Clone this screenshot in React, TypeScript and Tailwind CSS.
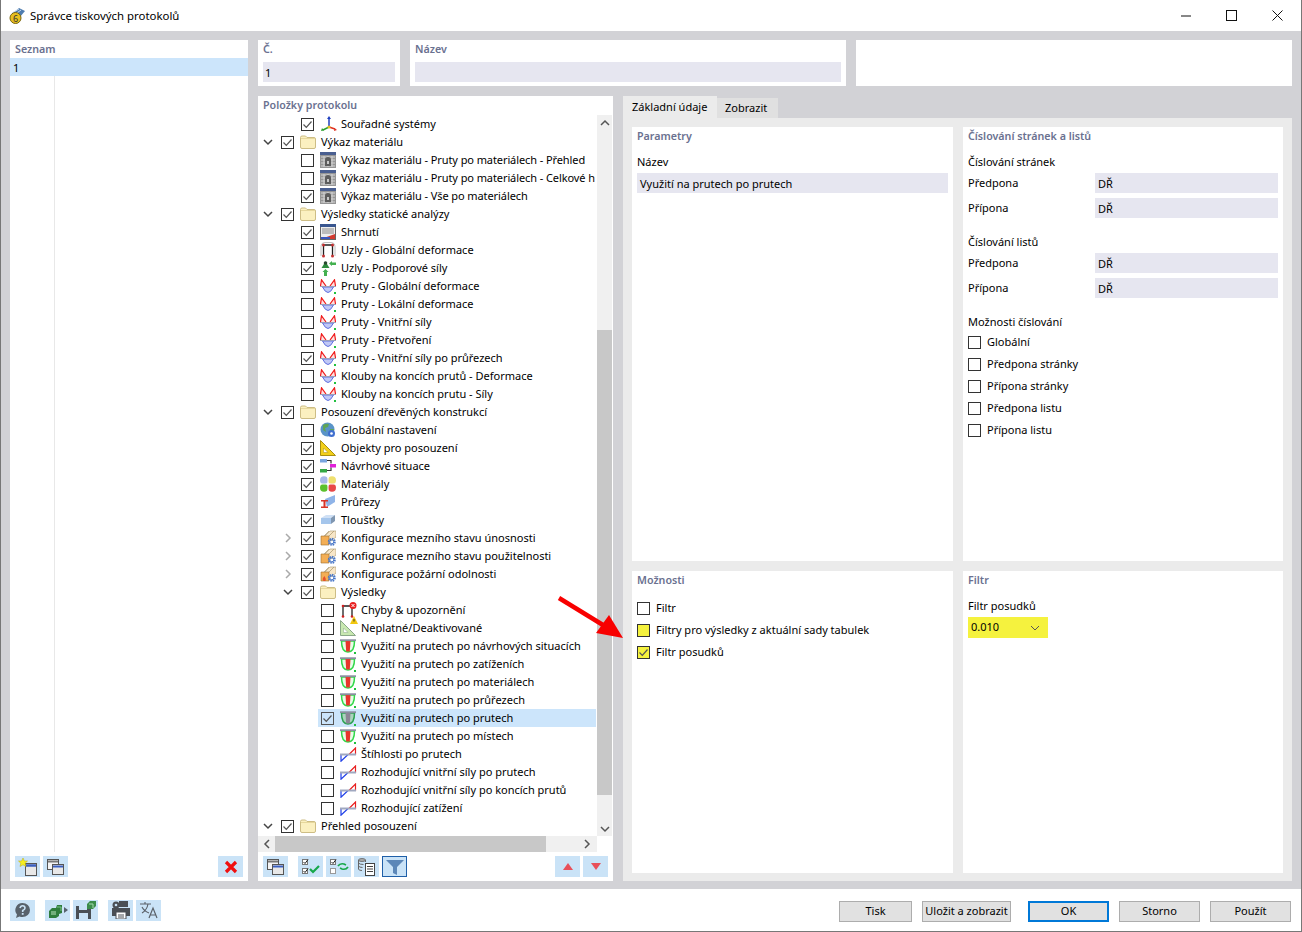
import React from 'react'

const font = 'font-["Noto_Sans",sans-serif]'

// --- icons ---------------------------------------------------------------

const Axes = () => (
  <svg width="18" height="16" viewBox="0 0 18 16">
    <path d="M9 2v9" stroke="#1f3fbf" strokeWidth="1.500" />
    <path d="M9 0l2 3H7z" fill="#1f3fbf" />
    <path d="M9 11l6 2" stroke="#e03020" strokeWidth="1.500" />
    <path d="M17 14l-3 1 .5-3z" fill="#e03020" />
    <path d="M9 11l-6 3" stroke="#2ca02c" strokeWidth="1.500" />
    <path d="M1 15l1-3 2 2.500z" fill="#2ca02c" />
    <circle cx="9" cy="11" r="1.500" fill="#e8c020" />
  </svg>
)

const Folder = () => (
  <svg width="16" height="14" viewBox="0 0 16 14">
    <path d="M.5 2.500Q.5 1 2 1h3.500l1.500 1.500h7q1.500 0 1.500 1.500v8q0 1.500-1.500 1.500H2Q.5 13.500.5 12z" fill="#fbf0c0" stroke="#cdbd85" />
    <path d="M1 3.500h14" stroke="#e6d79c" />
  </svg>
)

const TableGray = () => (
  <svg width="16" height="16" viewBox="0 0 16 16">
    <rect width="16" height="16" fill="#969696" />
    <rect width="16" height="3" fill="#4a5f90" />
    <path d="M1 5h14M1 8h14M1 11h14M1 14h14M4 4v11M8 4v11M12 4v11" stroke="#d4d4d4" />
    <path d="M8 5a3 3 0 0 1 3 3v6H5V8a3 3 0 0 1 3-3z" fill="#5c5c5c" />
    <rect x="7" y="9" width="2" height="3" fill="#c8c8c8" />
  </svg>
)

const Summary = () => (
  <svg width="16" height="16" viewBox="0 0 16 16">
    <rect x=".5" y=".5" width="15" height="15" fill="#eeeeee" stroke="#666" />
    <rect width="16" height="3" fill="#39568f" />
    <path d="M2 5h12M2 7h12M2 9h12" stroke="#8a8a8a" />
    <path d="M1 15l14-5v5z" fill="#d23a30" />
    <path d="M1 15h9v-2H1z" fill="#3a56c0" />
  </svg>
)

const NodeFrame = () => (
  <svg width="16" height="16" viewBox="0 0 16 16">
    <path d="M1 14V5Q1 .5 5 .5h6q4 0 4 4.500v9" fill="none" stroke="#c0c0c0" />
    <path d="M3.500 13V3h9v10" fill="none" stroke="#222" strokeWidth="1.300" />
    <circle cx="3.500" cy="3" r="1.500" fill="#c23030" />
    <circle cx="12.500" cy="3" r="1.500" fill="#c23030" />
    <circle cx="3.500" cy="14" r="1.500" fill="#c23030" />
    <circle cx="12.500" cy="14" r="1.500" fill="#c23030" />
  </svg>
)

const Supports = () => (
  <svg width="16" height="16" viewBox="0 0 16 16">
    <path d="M5.500 1.500l4 6.500h-8z" fill="#2e8b3d" />
    <circle cx="5.500" cy="3" r="1.800" fill="#2a4a30" />
    <path d="M5.500 9l3 3H7v4H4v-4H2.500z" fill="#43b04f" />
    <path d="M9 3.500L12 1v1.500h4v2.500h-4v1z" fill="#43b04f" />
  </svg>
)

const MemberDiagram = () => (
  <svg width="16" height="15" viewBox="0 0 16 15">
    <path d="M2.500 8q5.500 11 11 0z" fill="#c0c8f5" stroke="#6070e0" />
    <path d="M.5 7L1.500.8 6 7" fill="#fde0e0" stroke="#f01818" strokeWidth="1.200" />
    <path d="M15.500 7L14.500.8 10 7" fill="#fde0e0" stroke="#f01818" strokeWidth="1.200" />
    <path d="M0 7.500h16" stroke="#9a9fb8" />
    <rect x="14" y="13" width="2" height="2" fill="#22c040" />
  </svg>
)

const Globe = () => (
  <svg width="16" height="16" viewBox="0 0 16 16">
    <circle cx="7.500" cy="7.500" r="7" fill="#5a94c8" />
    <path d="M3 3q3-2 6-1l-1 3-3 1 1 4-3-2zM10 7l4 0-1 4-3 2z" fill="#5fa557" />
    <circle cx="11.500" cy="11.500" r="3.500" fill="#3f6fd0" />
    <circle cx="11.500" cy="11.500" r="1.300" fill="#fff" />
  </svg>
)

const Ruler = ({ fill = '#f2cf1a', stroke = '#a88f10' }: { fill?: string; stroke?: string }) => (
  <svg width="16" height="16" viewBox="0 0 16 16">
    <path d="M.5.5l15 15H.5z" fill={fill} stroke={stroke} />
    <path d="M3.500 8l4.500 4.500H3.500z" fill="#fff" stroke={stroke} strokeWidth=".5" />
  </svg>
)

const Situations = () => (
  <svg width="16" height="16" viewBox="0 0 16 16">
    <rect x="0" y="1" width="7" height="3.500" fill="#7aa6e0" />
    <rect x="0" y="11" width="7" height="3.500" fill="#35a845" />
    <rect x="10" y="6" width="6" height="3.500" fill="#e020d8" />
    <path d="M7 2.500h4v3M7 12.500h4v-3" fill="none" stroke="#333" strokeWidth="1.200" />
  </svg>
)

const Materials = () => (
  <svg width="16" height="16" viewBox="0 0 16 16">
    <circle cx="4" cy="4.200" r="4" fill="#a9b8e8" />
    <circle cx="12" cy="4.200" r="4" fill="#efe070" />
    <circle cx="4" cy="11.800" r="4" fill="#5cc02c" />
    <circle cx="12" cy="11.800" r="4" fill="#e84848" />
    <path d="M8 0v16M0 8h16" stroke="#fff" />
  </svg>
)

const Sections = () => (
  <svg width="16" height="16" viewBox="0 0 16 16">
    <path d="M5 5l10-4v7L7 13z" fill="#8fb4e8" />
    <path d="M1 6h7v1.500H5.500v5H8V14H1v-1.500h2.500v-5H1z" fill="#d8352a" />
  </svg>
)

const Thickness = () => (
  <svg width="16" height="16" viewBox="0 0 16 16">
    <path d="M1 6l5-3h9l-4 3z" fill="#cfe0f5" />
    <path d="M1 6h10v6H1z" fill="#a5c6ec" />
    <path d="M11 6l4-3v6l-4 3z" fill="#7f96b0" />
  </svg>
)

const Config = ({ fire = false }: { fire?: boolean }) => (
  <svg width="16" height="16" viewBox="0 0 16 16">
    <path d="M5 6l5-5h6v6l-5 4z" fill="#f7e6c8" stroke="#a89468" strokeWidth=".6" />
    <path d="M1 6h8v9H1z" fill="#f3ae55" stroke="#a07030" strokeWidth=".6" />
    <path d="M4 6l5-5M9 6l5-5" stroke="#a89468" strokeWidth=".7" />
    <circle cx="11.800" cy="11.800" r="3" fill="none" stroke="#4a78c8" strokeWidth="2" strokeDasharray="1.500 .8" />
    <circle cx="11.800" cy="11.800" r="2" fill="none" stroke="#4a78c8" />
    {fire && <path d="M3.500 15q-2-2 1-5 2 3 1 5z" fill="#e8502a" />}
  </svg>
)

const Errors = () => (
  <svg width="18" height="16" viewBox="0 0 18 16">
    <path d="M3 15V4h9v11" fill="none" stroke="#222" strokeWidth="1.300" />
    <circle cx="3" cy="4" r="1.300" fill="#d02020" />
    <circle cx="3" cy="14.500" r="1.300" fill="#d02020" />
    <circle cx="12" cy="14.500" r="1.300" fill="#d02020" />
    <circle cx="13" cy="3.500" r="3.500" fill="#e82020" />
    <path d="M11.500 2l3 3m0-3l-3 3" stroke="#fff" />
  </svg>
)

const Invalid = () => (
  <div className="relative w-[18px] h-4">
    <Ruler fill="#c8e8b0" stroke="#8aa888" />
    <svg className="absolute right-0 -top-1" width="8" height="8" viewBox="0 0 8 8">
      <path d="M4 0l4 8H0z" fill="#f2c810" />
      <path d="M4 3v2.500" stroke="#333" />
    </svg>
  </div>
)

const Utilization = ({ selected = false }: { selected?: boolean }) => (
  <svg width="16" height="15" viewBox="0 0 16 15">
    <path d="M1.500 2q0 11 6.500 11t6.500-11z" fill={selected ? '#a9d4bd' : '#e9fbe9'} stroke={selected ? '#2aa050' : '#30d848'} strokeWidth="1.500" />
    <path d="M5.500 2h5l-.7 10.500H6.200z" fill={selected ? '#8c8496' : '#e8352c'} />
    <path d="M0 1.200h16" stroke="#8a8fa0" strokeWidth="1.800" />
    <rect x="14" y="13" width="2" height="2" fill="#22c040" />
  </svg>
)

const Slender = () => (
  <svg width="17" height="15" viewBox="0 0 17 15">
    <path d="M9 7.500l6.500-6.500v6.500z" fill="#fff" stroke="#e82020" strokeWidth="1.200" />
    <path d="M1 7.500h7L1 14.200z" fill="#fff" stroke="#2040e8" strokeWidth="1.200" />
    <path d="M0 7.500h16" stroke="#a0a8c0" strokeWidth="2" />
  </svg>
)

const WindowsIcon = () => (
  <svg width="17" height="16" viewBox="0 0 17 16">
    <rect x=".5" y=".5" width="11" height="10" fill="#f4f4f4" stroke="#555" />
    <path d="M1 2.500h10" stroke="#777" strokeWidth="2" />
    <rect x="5.500" y="5.500" width="11" height="10" fill="#e8e8e8" stroke="#555" />
    <path d="M6 7.500h10" stroke="#3a5fc0" strokeWidth="2" />
  </svg>
)

const NewWindowIcon = () => (
  <svg width="20" height="18" viewBox="0 0 20 18">
    <rect x="7.500" y="5.500" width="11" height="12" fill="#e8e8e8" stroke="#555" />
    <path d="M8 7.500h10" stroke="#3a5fc0" strokeWidth="2.500" />
    <path d="M5 0l1.400 3L9.500 3 7.200 5.200 8 8.500 5 6.800 2 8.500l.8-3.300L.5 3l3.100 0z" fill="#f6ee20" stroke="#b8a810" strokeWidth=".5" />
  </svg>
)

const RedX = () => (
  <svg width="14" height="14" viewBox="0 0 14 14">
    <path d="M2 2l10 10M12 2L2 12" stroke="#f01010" strokeWidth="3.200" />
  </svg>
)

const CheckAll = () => (
  <svg width="20" height="18" viewBox="0 0 20 18">
    <rect x="1.500" y="1.500" width="5" height="5" fill="#fff" stroke="#777" />
    <path d="M2.500 4l1.500 1.500L7 1.500" fill="none" stroke="#222" />
    <rect x="1.500" y="10.500" width="5" height="5" fill="#fff" stroke="#777" />
    <path d="M2.500 13l1.500 1.500L7 10.500" fill="none" stroke="#222" />
    <path d="M9 11l3 3L18 8" fill="none" stroke="#17a84a" strokeWidth="2.200" />
  </svg>
)

const CheckSwap = () => (
  <svg width="20" height="18" viewBox="0 0 20 18">
    <rect x="1.500" y="1.500" width="5" height="5" fill="#fff" stroke="#777" />
    <path d="M2.500 4l1.500 1.500L7 1.500" fill="none" stroke="#222" />
    <rect x="1.500" y="10.500" width="5" height="5" fill="#fff" stroke="#999" />
    <path d="M9 8q2-3 6-2l2 1M19 9q-2 3-6 2l-2-1" fill="none" stroke="#17a84a" strokeWidth="1.700" />
  </svg>
)

const CopyList = () => (
  <svg width="20" height="18" viewBox="0 0 20 18">
    <ellipse cx="5" cy="2" rx="3.500" ry="1.500" fill="#aaa" stroke="#555" strokeWidth=".7" />
    <path d="M1.500 2v9q0 1.500 3.500 1.500M8.500 2v2M1.500 5q1 1.500 5 1.500M1.500 8q1 1.500 4 1.500" fill="none" stroke="#666" />
    <rect x="8.500" y="5.500" width="9" height="12" fill="#fff" stroke="#444" />
    <path d="M10 8.500h6M10 11h6M10 13.500h6" stroke="#444" />
  </svg>
)

const Funnel = () => (
  <svg width="18" height="16" viewBox="0 0 18 16">
    <path d="M0 1h18l-7 7v8l-4-2V8z" fill="#5c87b8" />
  </svg>
)

const Tri = ({ down = false }: { down?: boolean }) => (
  <svg width="10" height="7" viewBox="0 0 10 7">
    <path d={down ? 'M0 0h10L5 7z' : 'M0 7h10L5 0z'} fill="#e8505a" />
  </svg>
)

const Help = () => (
  <svg width="17" height="17" viewBox="0 0 17 17">
    <path d="M8.500 1a7.500 7 0 0 1 0 14c-1 0-2-.2-3-.6L2 16l1-3.500A7 7 0 0 1 8.500 1z" fill="#58626c" />
    <path d="M6 6q.5-2.300 2.700-2.300T11 6q0 1.500-2.300 2.500V10" fill="none" stroke="#c9e2f6" strokeWidth="1.600" />
    <rect x="7.800" y="11" width="1.800" height="1.800" fill="#c9e2f6" />
  </svg>
)

const CubeArrow = () => (
  <svg width="20" height="16" viewBox="0 0 20 16">
    <path d="M1 9l3-3h4l1-3h5v8l-3 1v2l-3 2H1z" fill="#2f7d3d" />
    <path d="M3 10h5M3 12h5" stroke="#b8e4bd" />
    <path d="M9 5h4v4" fill="none" stroke="#7cc488" />
    <path d="M16 5l4 3-4 3z" fill="#58626c" />
  </svg>
)

const SaveCube = () => (
  <svg width="20" height="18" viewBox="0 0 20 18">
    <path d="M0 5h13l2 2v11H0z" fill="#4a4f55" />
    <rect x="3" y="5" width="8" height="4" fill="#c9e2f6" />
    <rect x="3" y="12" width="9" height="6" fill="#c9e2f6" />
    <path d="M11 3l3-3h6v5l-3 3h-6z" fill="#3d8d4a" />
    <path d="M13 3h4v4" fill="none" stroke="#a6dcae" />
  </svg>
)

const PrinterGear = () => (
  <svg width="20" height="18" viewBox="0 0 20 18">
    <rect x="1" y="7" width="18" height="8" fill="#4a4f55" />
    <rect x="5" y="11" width="10" height="7" fill="#fff" stroke="#4a4f55" />
    <path d="M7 14h6M7 16h6" stroke="#4a4f55" />
    <rect x="8" y="0" width="9" height="6" fill="#4a4f55" />
    <circle cx="5" cy="4" r="3.500" fill="#4a4f55" />
    <circle cx="5" cy="4" r="1.300" fill="#c9e2f6" />
  </svg>
)

const Translate = () => (
  <svg width="20" height="18" viewBox="0 0 20 18">
    <path d="M1 3h11M6 1v2M3 12q5-3 6-9M3 6q2 4 7 6" fill="none" stroke="#5a6068" strokeWidth="1.100" />
    <path d="M10 17l4-10 4 10M11.500 14h5" fill="none" stroke="#5a6068" strokeWidth="1.200" />
  </svg>
)

const AppIcon = () => (
  <svg width="17" height="17" viewBox="0 0 17 17">
    <path d="M3 7l7-6 6 3-5 6z" fill="#4f7db0" />
    <path d="M3 6l7-4M5 8l7-5" stroke="#c9dcf0" />
    <circle cx="6.500" cy="11" r="5.500" fill="#e8c020" stroke="#7a6510" />
    <text x="4" y="14.500" fontSize="9" fill="#333">6</text>
  </svg>
)

// --- small controls ------------------------------------------------------

const Check = ({ checked = false, yellow = false, light = false }: { checked?: boolean; yellow?: boolean; light?: boolean }) => (
  <span className={`flex items-center justify-center w-[13px] h-[13px] shrink-0 border ${light ? 'border-[#555]' : 'border-[#333]'} ${yellow ? 'bg-[#f5f23e]' : light ? 'bg-transparent' : 'bg-white'}`}>
    {checked && (
      <svg width="11" height="11" viewBox="0 0 11 11">
        <path d="M1.500 5.500l2.800 2.800L9.500 2.500" fill="none" stroke="#555" strokeWidth="1.200" />
      </svg>
    )}
  </span>
)

const Chevron = ({ open }: { open: boolean }) => (
  <svg width="10" height="10" viewBox="0 0 10 10">
    {open ? (
      <path d="M1 3l4 4 4-4" fill="none" stroke="#444" strokeWidth="1.500" />
    ) : (
      <path d="M3 1l4 4-4 4" fill="none" stroke="#aaa" strokeWidth="1.500" />
    )}
  </svg>
)

const ScrollArrow = ({ dir }: { dir: 'up' | 'down' | 'left' | 'right' }) => {
  const d = { up: 'M1 7l4-4 4 4', down: 'M1 3l4 4 4-4', left: 'M7 1L3 5l4 4', right: 'M3 1l4 4-4 4' }[dir]
  return (
    <svg width="10" height="10" viewBox="0 0 10 10">
      <path d={d} fill="none" stroke="#555" strokeWidth="1.500" />
    </svg>
  )
}

const ToolBtn = ({ children, active = false, className = '' }: { children: React.ReactNode; active?: boolean; className?: string }) => (
  <div className={`flex items-center justify-center w-[25px] h-[21px] bg-[#cae3f7] ${active ? 'border border-[#1f5fa8]' : ''} ${className}`}>
    {children}
  </div>
)

const Heading = ({ children }: { children: React.ReactNode }) => (
  <div className="text-[10.7px] leading-[16px] font-semibold text-[#6a7190]">{children}</div>
)

const Field = ({ children, className = '' }: { children?: React.ReactNode; className?: string }) => (
  <div className={`h-5 bg-[#e6e6f0] text-[11px] leading-[22px] text-black ${className}`}>{children}</div>
)

const FootBtn = ({ label, width, primary = false }: { label: string; width: string; primary?: boolean }) => (
  <div className={`flex items-center justify-center h-[21px] bg-[#e1e1e1] text-[11px] text-black ${width} ${primary ? 'border-2 border-[#0078d7]' : 'border border-[#adadad]'}`}>
    {label}
  </div>
)

// --- tree data -----------------------------------------------------------

interface Row {
  level: 0 | 1 | 2
  label: string
  checked?: boolean
  icon: React.ReactNode
  chevron?: 'open' | 'closed'
  selected?: boolean
  tight?: boolean
}

const rows: Row[] = [
  { level: 1, label: 'Souřadné systémy', checked: true, icon: <Axes /> },
  { level: 0, label: 'Výkaz materiálu', checked: true, icon: <Folder />, chevron: 'open' },
  { level: 1, label: 'Výkaz materiálu - Pruty po materiálech - Přehled', icon: <TableGray />, tight: true },
  { level: 1, label: 'Výkaz materiálu - Pruty po materiálech - Celkové h', icon: <TableGray />, tight: true },
  { level: 1, label: 'Výkaz materiálu - Vše po materiálech', checked: true, icon: <TableGray />, tight: true },
  { level: 0, label: 'Výsledky statické analýzy', checked: true, icon: <Folder />, chevron: 'open' },
  { level: 1, label: 'Shrnutí', checked: true, icon: <Summary /> },
  { level: 1, label: 'Uzly - Globální deformace', icon: <NodeFrame /> },
  { level: 1, label: 'Uzly - Podporové síly', checked: true, icon: <Supports /> },
  { level: 1, label: 'Pruty - Globální deformace', icon: <MemberDiagram /> },
  { level: 1, label: 'Pruty - Lokální deformace', icon: <MemberDiagram /> },
  { level: 1, label: 'Pruty - Vnitřní síly', icon: <MemberDiagram /> },
  { level: 1, label: 'Pruty - Přetvoření', icon: <MemberDiagram /> },
  { level: 1, label: 'Pruty - Vnitřní síly po průřezech', checked: true, icon: <MemberDiagram /> },
  { level: 1, label: 'Klouby na koncích prutů - Deformace', icon: <MemberDiagram /> },
  { level: 1, label: 'Klouby na koncích prutu - Síly', icon: <MemberDiagram /> },
  { level: 0, label: 'Posouzení dřevěných konstrukcí', checked: true, icon: <Folder />, chevron: 'open' },
  { level: 1, label: 'Globální nastavení', icon: <Globe /> },
  { level: 1, label: 'Objekty pro posouzení', checked: true, icon: <Ruler /> },
  { level: 1, label: 'Návrhové situace', checked: true, icon: <Situations /> },
  { level: 1, label: 'Materiály', checked: true, icon: <Materials /> },
  { level: 1, label: 'Průřezy', checked: true, icon: <Sections /> },
  { level: 1, label: 'Tloušťky', checked: true, icon: <Thickness /> },
  { level: 1, label: 'Konfigurace mezního stavu únosnosti', checked: true, icon: <Config />, chevron: 'closed' },
  { level: 1, label: 'Konfigurace mezního stavu použitelnosti', checked: true, icon: <Config />, chevron: 'closed' },
  { level: 1, label: 'Konfigurace požární odolnosti', checked: true, icon: <Config fire />, chevron: 'closed' },
  { level: 1, label: 'Výsledky', checked: true, icon: <Folder />, chevron: 'open' },
  { level: 2, label: 'Chyby & upozornění', icon: <Errors /> },
  { level: 2, label: 'Neplatné/Deaktivované', icon: <Invalid /> },
  { level: 2, label: 'Využití na prutech po návrhových situacích', icon: <Utilization /> },
  { level: 2, label: 'Využití na prutech po zatíženích', icon: <Utilization /> },
  { level: 2, label: 'Využití na prutech po materiálech', icon: <Utilization /> },
  { level: 2, label: 'Využití na prutech po průřezech', icon: <Utilization /> },
  { level: 2, label: 'Využití na prutech po prutech', checked: true, icon: <Utilization selected />, selected: true },
  { level: 2, label: 'Využití na prutech po místech', icon: <Utilization /> },
  { level: 2, label: 'Štíhlosti po prutech', icon: <Slender /> },
  { level: 2, label: 'Rozhodující vnitřní síly po prutech', icon: <Slender /> },
  { level: 2, label: 'Rozhodující vnitřní síly po koncích prutů', icon: <Slender /> },
  { level: 2, label: 'Rozhodující zatížení', icon: <Slender /> },
  { level: 0, label: 'Přehled posouzení', checked: true, icon: <Folder />, chevron: 'open' },
]

const indent = { 0: 'pl-0', 1: 'pl-[20px]', 2: 'pl-[40px]' }

const TreeRow = ({ row }: { row: Row }) => (
  <div className={`flex items-center h-[18px] shrink-0 ${indent[row.level]}`}>
    <span className="flex items-center justify-center w-5 shrink-0">
      {row.chevron && <Chevron open={row.chevron === 'open'} />}
    </span>
    <div className={`flex items-center h-[18px] flex-1 min-w-0 pl-[3px] ${row.selected ? 'bg-[#cce5fb]' : ''}`}>
      <Check checked={row.checked} light={row.selected} />
      <span className="flex items-center w-[21px] h-4 ml-[6px] shrink-0">{row.icon}</span>
      <span className={`text-[11px] whitespace-nowrap text-black ${row.tight ? 'tracking-[-0.09px]' : ''}`}>{row.label}</span>
    </div>
  </div>
)

const CheckRow = ({ label, checked, yellow }: { label: string; checked?: boolean; yellow?: boolean }) => (
  <div className="flex items-center gap-[6px] h-[22px] text-[11px] text-black">
    <Check checked={checked} yellow={yellow} />
    <span>{label}</span>
  </div>
)

const LabelField = ({ label }: { label: string }) => (
  <div className="flex items-center h-5 text-[11px] text-black">
    <span className="w-[127px] shrink-0 leading-[22px]">{label}</span>
    <Field className="flex-1 pl-[3px]">DŘ</Field>
  </div>
)

export default function App() {
  return (
    <div className={`w-[1302px] h-[932px] flex flex-col overflow-hidden relative bg-[#d2d2d6] border-x border-b border-[#777] ${font}`}>
      {/* title bar */}
      <div className="flex items-center h-[31px] shrink-0 bg-white pl-[8px]">
        <AppIcon />
        <span className="ml-[4px] text-[11.4px] text-black">Správce tiskových protokolů</span>
        <div className="flex ml-auto items-center">
          <svg className="mr-[35px]" width="10" height="10" viewBox="0 0 10 10"><path d="M0 5h10" stroke="#111" /></svg>
          <svg className="mr-[35px]" width="11" height="11" viewBox="0 0 11 11"><rect x=".5" y=".5" width="10" height="10" fill="none" stroke="#111" /></svg>
          <svg className="mr-[18px]" width="11" height="11" viewBox="0 0 11 11"><path d="M.5.5l10 10M10.500.5l-10 10" stroke="#111" /></svg>
        </div>
      </div>

      {/* body */}
      <div className="flex flex-1 min-h-0 pt-[9px] pb-2 pl-[9px] pr-[9px] gap-[10px]">
        {/* seznam */}
        <div className="flex flex-col w-[238px] shrink-0 bg-white">
          <div className="h-[18px] pl-[5px] pt-[1px]"><Heading>Seznam</Heading></div>
          <div className="flex-1 flex min-h-0 relative">
            <div className="w-[45px] border-r border-[#e8e8e8]" />
            <div className="absolute inset-x-0 top-0 h-[18px] bg-[#cce5fb] pl-[3px] text-[11px] leading-[20px] text-black">1</div>
          </div>
          <div className="flex items-end h-[29px] pl-[5px] pr-[5px] pb-[4px] gap-[3px] shrink-0">
            <ToolBtn><NewWindowIcon /></ToolBtn>
            <ToolBtn><WindowsIcon /></ToolBtn>
            <ToolBtn className="ml-auto"><RedX /></ToolBtn>
          </div>
        </div>

        {/* right part */}
        <div className="flex flex-col flex-1 min-w-0 gap-[10px]">
          <div className="flex h-[46px] gap-[10px] shrink-0">
            <div className="w-[142px] bg-white px-[5px] pt-[1px]">
              <Heading>Č.</Heading>
              <Field className="mt-[5px] pl-[2px]">1</Field>
            </div>
            <div className="w-[436px] bg-white px-[5px] pt-[1px]">
              <Heading>Název</Heading>
              <Field className="mt-[5px]" />
            </div>
            <div className="flex-1 bg-white" />
          </div>

          <div className="flex flex-1 min-h-0 gap-[10px]">
            {/* položky protokolu */}
            <div className="flex flex-col w-[355px] shrink-0 bg-white">
              <div className="h-[19px] pl-[5px] pt-[1px] shrink-0"><Heading>Položky protokolu</Heading></div>
              <div className="flex h-[721px] shrink-0">
                <div className="flex flex-col w-[339px] pr-[1px] overflow-hidden">
                  {rows.map((r) => (
                    <TreeRow key={r.label} row={r} />
                  ))}
                </div>
                <div className="flex flex-col w-[15px] bg-[#f0f0f0]">
                  <div className="flex items-center justify-center h-[15px]"><ScrollArrow dir="up" /></div>
                  <div className="h-[200px]" />
                  <div className="h-[465px] bg-[#c8c8c8]" />
                  <div className="flex-1" />
                  <div className="flex items-center justify-center h-[15px]"><ScrollArrow dir="down" /></div>
                </div>
              </div>
              <div className="flex w-[339px] h-4 bg-[#f0f0f0] shrink-0">
                <div className="flex items-center justify-center w-[17px]"><ScrollArrow dir="left" /></div>
                <div className="w-[271px] bg-[#c8c8c8]" />
                <div className="flex-1" />
                <div className="flex items-center justify-center w-[21px]"><ScrollArrow dir="right" /></div>
              </div>
              <div className="flex items-center h-[21px] mt-[4px] pl-[5px] pr-[5px] gap-[3px] shrink-0">
                <ToolBtn><WindowsIcon /></ToolBtn>
                <ToolBtn className="ml-[7px]"><CheckAll /></ToolBtn>
                <ToolBtn><CheckSwap /></ToolBtn>
                <ToolBtn><CopyList /></ToolBtn>
                <ToolBtn active><Funnel /></ToolBtn>
                <ToolBtn className="ml-auto"><Tri /></ToolBtn>
                <ToolBtn><Tri down /></ToolBtn>
              </div>
            </div>

            {/* tabs */}
            <div className="flex flex-col flex-1 min-w-0">
              <div className="flex items-end h-[22px] shrink-0 text-[11px] text-black">
                <div className="flex items-center w-[94px] h-[22px] pl-[9px] bg-[#ebebeb]">Základní údaje</div>
                <div className="flex items-center w-[61px] h-5 pl-[8px] bg-[#e0e0e0]">Zobrazit</div>
              </div>
              <div className="grid grid-cols-[321px_320px] grid-rows-[434px_302px] gap-x-[10px] gap-y-[10px] flex-1 min-h-0 bg-[#ebebeb] pl-[9px] pt-[9px]">
                <div className="bg-white px-[5px] pt-[1px]">
                  <Heading>Parametry</Heading>
                  <div className="mt-[9px] text-[11px] leading-[18px] text-black">Název</div>
                  <Field className="mt-[2px] pl-[3px]">Využití na prutech po prutech</Field>
                </div>
                <div className="bg-white px-[5px] pt-[1px]">
                  <Heading>Číslování stránek a listů</Heading>
                  <div className="mt-[9px] text-[11px] leading-[18px] text-black">Číslování stránek</div>
                  <div className="flex flex-col gap-[5px] mt-[2px]">
                    <LabelField label="Předpona" />
                    <LabelField label="Přípona" />
                  </div>
                  <div className="mt-[15px] text-[11px] leading-[18px] text-black">Číslování listů</div>
                  <div className="flex flex-col gap-[5px] mt-[2px]">
                    <LabelField label="Předpona" />
                    <LabelField label="Přípona" />
                  </div>
                  <div className="mt-[15px] text-[11px] leading-[18px] text-black">Možnosti číslování</div>
                  <div className="flex flex-col">
                    <CheckRow label="Globální" />
                    <CheckRow label="Předpona stránky" />
                    <CheckRow label="Přípona stránky" />
                    <CheckRow label="Předpona listu" />
                    <CheckRow label="Přípona listu" />
                  </div>
                </div>
                <div className="bg-white px-[5px] pt-[1px]">
                  <Heading>Možnosti</Heading>
                  <div className="flex flex-col mt-[9px]">
                    <CheckRow label="Filtr" />
                    <CheckRow label="Filtry pro výsledky z aktuální sady tabulek" yellow />
                    <CheckRow label="Filtr posudků" checked yellow />
                  </div>
                </div>
                <div className="bg-white px-[5px] pt-[1px]">
                  <Heading>Filtr</Heading>
                  <div className="mt-[9px] text-[11px] leading-[18px] text-black">Filtr posudků</div>
                  <div className="flex items-center justify-between w-[80px] h-[21px] mt-[2px] pl-[3px] pr-[8px] bg-[#f5f23e] text-[11px] text-black">
                    <span>0.010</span>
                    <svg width="10" height="6" viewBox="0 0 10 6"><path d="M1 1l4 4 4-4" fill="none" stroke="#555" /></svg>
                  </div>
                </div>
              </div>
            </div>
          </div>
        </div>
      </div>

      {/* footer */}
      <div className="flex items-center h-[42px] shrink-0 bg-white pl-[9px] pr-[10px]">
        <ToolBtn><Help /></ToolBtn>
        <ToolBtn className="ml-[10px]"><CubeArrow /></ToolBtn>
        <ToolBtn className="ml-[3px]"><SaveCube /></ToolBtn>
        <ToolBtn className="ml-[10px]"><PrinterGear /></ToolBtn>
        <ToolBtn className="ml-[3px]"><Translate /></ToolBtn>
        <div className="flex items-center ml-auto mt-[2px]">
          <FootBtn label="Tisk" width="w-[73px]" />
          <div className="ml-[10px]"><FootBtn label="Uložit a zobrazit" width="w-[89px]" /></div>
          <div className="ml-[17px]"><FootBtn label="OK" width="w-[81px]" primary /></div>
          <div className="ml-[10px]"><FootBtn label="Storno" width="w-[81px]" /></div>
          <div className="ml-[10px]"><FootBtn label="Použít" width="w-[81px]" /></div>
        </div>
      </div>

      {/* red arrow over the screenshot */}
      <svg className="absolute left-[554px] top-[593px]" width="72" height="48" viewBox="0 0 72 48">
        <path d="M4 5l44 27" stroke="#f80000" strokeWidth="4.500" />
        <path d="M54 22L41 40 68 45z" fill="#f80000" />
      </svg>
    </div>
  )
}
